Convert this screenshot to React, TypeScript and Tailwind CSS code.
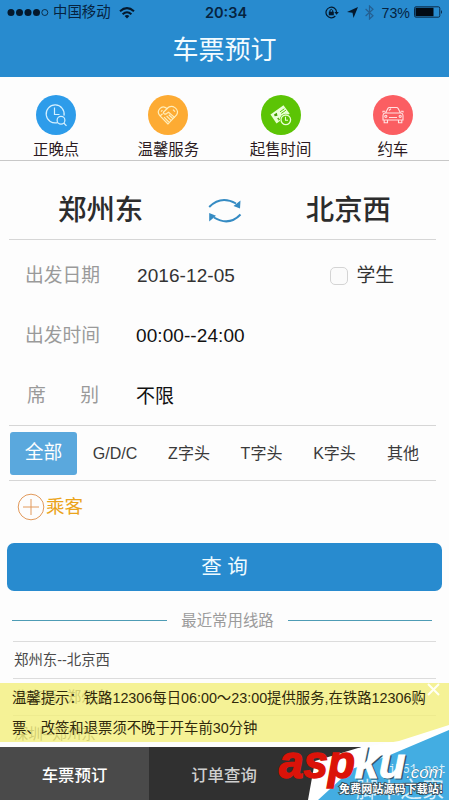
import { type ReactNode } from 'react'

interface Shortcut {
  label: string
  color: string
  icon: ReactNode
}

interface Field {
  label: ReactNode
  value: string
  valueClass: string
}

const shortcuts: Shortcut[] = [
  {
    label: '正晚点',
    color: 'bg-[#2d9cea]',
    icon: (
      <svg width="24" height="24" viewBox="0 0 24 24" fill="none" stroke="#d5f0ff" strokeWidth="1.2">
        <path d="M13.6 19.6A9 9 0 1 1 20 12.6" />
        <path d="M10.5 4.5V11.5H15.5" />
        <circle cx="17" cy="17.3" r="3.9" />
        <path d="M19.8 20L22.5 22.8" />
      </svg>
    ),
  },
  {
    label: '温馨服务',
    color: 'bg-[#fdab33]',
    icon: (
      <svg width="24" height="24" viewBox="0 0 24 24" fill="none" stroke="#ffeebb" strokeWidth="1.2">
        <path d="M12 21L3.8 12.6C-.2 8 5.5 .8 11 5.5C16 .5 24 6 20.6 12L12 21Z" />
        <path d="M11.5 5.3L7.4 9.2Q7.8 12 10.6 10.6L12.6 9.2L18.8 14.6M4 13L6.6 10.8M12.8 11.8L17 15.8M10.6 13L15 17.4M8 14.2L12.8 19M5 8.6L6.4 7.2M17 6.6L19 8.6" />
      </svg>
    ),
  },
  {
    label: '起售时间',
    color: 'bg-[#5cc405]',
    icon: (
      <svg width="24" height="24" viewBox="0 0 24 24" fill="none">
        <path d="M1.5 11.5L14.5 2.2L20.7 10.8L7.5 20.5Z" fill="#e9ffd5" />
        <path d="M5 11.5L7.8 9.8L8.5 12.8L5.7 13.3ZM8 15.8L9.8 14.4L10 17Z" fill="#42a000" />
        <path d="M11 8.8L15.3 5.8M12.2 10.5L16.8 7.3M9.5 17.2L12 15" stroke="#5cc405" />
        <circle cx="16.8" cy="16.8" r="6" fill="#5cc405" />
        <circle cx="16.8" cy="16.8" r="4.8" stroke="#e9ffd5" strokeWidth="1.3" />
        <path d="M16.5 13.8V17.2H19" stroke="#e9ffd5" strokeWidth="1.1" />
      </svg>
    ),
  },
  {
    label: '约车',
    color: 'bg-[#fb5e62]',
    icon: (
      <svg width="24" height="24" viewBox="0 0 24 24" fill="none" stroke="#ffe2e2" strokeWidth="1.1">
        <path d="M4.5 10L7 5.2Q7.4 4.5 8.3 4.5H15.7Q16.6 4.5 17 5.2L19.5 10M3.8 10H20.2Q22 10.5 22 12.5V17H2V12.5Q2 10.5 3.8 10ZM3.2 17V19.7H6.5V17M17.5 17V19.7H20.8V17M4.2 8.2H2L1.8 9.5M19.8 8.2H22L22.2 9.5" />
        <path d="M8 14.5H16M8 7.5L10 5.6" />
        <circle cx="4.8" cy="13.3" r="1.1" />
        <circle cx="19.2" cy="13.3" r="1.1" />
      </svg>
    ),
  },
]

const fields: Field[] = [
  { label: '出发日期', value: '2016-12-05', valueClass: 'text-[#333] pl-px' },
  { label: '出发时间', value: '00:00--24:00', valueClass: 'text-[#111]' },
  {
    label: (
      <span className="flex justify-between px-[2px]">
        <span>席</span>
        <span>别</span>
      </span>
    ),
    value: '不限',
    valueClass: 'text-[#111]',
  },
]

const trainTypes = [
  { name: 'G/D/C', width: 'w-[76px]' },
  { name: 'Z字头', width: 'w-[72px]' },
  { name: 'T字头', width: 'w-[73px]' },
  { name: 'K字头', width: 'w-[73px]' },
  { name: '其他', width: 'w-[64px]' },
]

function StatusBar() {
  return (
    <div className="flex h-[25px] items-center pl-[7px] pr-[6px] text-[14px] leading-none text-[#06233f]">
      <div className="flex w-[198px] items-center">
        <svg width="42" height="9" viewBox="0 0 42 9" fill="#04182c">
          <circle cx="4" cy="4.5" r="3.5" />
          <circle cx="12.5" cy="4.5" r="3.5" />
          <circle cx="21" cy="4.5" r="3.5" />
          <circle cx="29.5" cy="4.5" r="3.5" />
          <circle cx="37.8" cy="4.5" r="3" fill="none" stroke="#04182c" strokeWidth=".8" />
        </svg>
        <span className="ml-[4px] text-[14.4px] whitespace-nowrap">中国移动</span>
        <svg className="ml-[8px]" width="16" height="12" viewBox="0 0 16 12" fill="none" stroke="#04182c" strokeWidth="2">
          <path d="M1 4.3Q8 -2 15 4.3M3.6 7.2Q8 3.2 12.4 7.2" />
          <path d="M5.6 9L8 11.5L10.4 9Q8 7.2 5.6 9Z" fill="#04182c" stroke="none" />
        </svg>
      </div>
      <span className="pt-px font-['Inter'] text-[14.5px] font-semibold">20:34</span>
      <div className="ml-auto flex items-center">
        <svg width="14" height="13" viewBox="0 0 14 13" fill="none" stroke="#04182c" strokeWidth="1.2">
          <path d="M10.3 10A5.3 5.3 0 1 1 11.6 6.2" />
          <path d="M9.4 6H13.8L11.6 8.8Z" fill="#04182c" stroke="none" />
          <path d="M3.8 5.7H8.8V9.3H3.8Z" fill="#04182c" stroke="none" />
          <path d="M4.9 6V4.4Q6.3 2.4 7.7 4.4V6" strokeWidth="1" />
        </svg>
        <svg className="ml-[8px]" width="11" height="11" viewBox="0 0 11 11" fill="#04182c">
          <path d="M11 0L6.5 11L5.5 5.8L0 5Z" />
        </svg>
        <svg className="ml-[7px]" width="9" height="15" viewBox="0 0 9 15" fill="none" stroke="#245f91" strokeWidth="1.2">
          <path d="M.6 4L8 10.8L4.5 14V1L8 4.2L.6 11" />
        </svg>
        <span className="ml-[8px] pt-px text-[14.2px]">73%</span>
        <svg className="ml-[4px]" width="29" height="12" viewBox="0 0 29 12">
          <rect x=".5" y=".8" width="25.3" height="10.4" rx="1.5" fill="none" stroke="#0a2a48" />
          <rect x="1.5" y="1.8" width="18" height="8.4" fill="#020a14" />
          <path d="M27 4Q29 6 27 8Z" fill="#0a2a48" />
        </svg>
      </div>
    </div>
  )
}

function Watermark() {
  return (
    <div className="absolute bottom-0 right-0 h-[90px] w-[200px] overflow-hidden">
      <svg width="200" height="90" viewBox="0 0 200 90">
        <path d="M59 90L66 51L109 38L150 31L200 15V90Z" fill="#fff" />
        <path d="M69 90L103 59L141 45L200 20V90Z" fill="#43ade2" />
        <g fill="#d6effa">
          <text x="139" y="63" fontFamily="'Liberation Mono', monospace" fontSize="13.5" textLength="58" lengthAdjust="spacingAndGlyphs">jb51.net</text>
          <text x="107" y="87" fontFamily="'Noto Sans CJK SC', sans-serif" fontSize="22" textLength="88">脚本之家</text>
        </g>
        <g fontFamily="'Liberation Sans', sans-serif" fontStyle="italic" fontWeight="bold">
          <text x="30" y="68" fontSize="46" fill="#db1309" stroke="#db1309" strokeWidth="1.5" textLength="76" lengthAdjust="spacingAndGlyphs">asp</text>
          {/* offset copy gives the white letters their shadow */}
          <text x="107" y="69" fontSize="43" fill="#30566d" stroke="#30566d" strokeWidth="1" textLength="51" lengthAdjust="spacingAndGlyphs" aria-hidden="true">ku</text>
          <text x="105.5" y="67.5" fontSize="43" fill="#fff" stroke="#fff" strokeWidth="1" textLength="51" lengthAdjust="spacingAndGlyphs">ku</text>
          <text x="157" y="68" fontSize="17" fill="#fff" stroke="#38799e" strokeWidth="1" paintOrder="stroke" textLength="37" fontWeight="normal">.com</text>
        </g>
        <text x="90" y="83" fontFamily="'Noto Sans CJK SC', sans-serif" fontSize="11" fontWeight="bold" fill="#fff" stroke="#334b59" strokeWidth="1.8" paintOrder="stroke" textLength="104">免费网站源码下载站!</text>
      </svg>
    </div>
  )
}

export default function App() {
  return (
    <div className="relative flex h-[800px] w-[449px] flex-col overflow-hidden bg-[#fdfdfd] font-['Liberation_Sans','Noto_Sans_CJK_SC',sans-serif]">
      <header className="h-[77px] shrink-0 bg-[#288bcf]">
        <StatusBar />
        <h1 className="text-center text-[26px] leading-[51px] text-[#f2fbff]">车票预订</h1>
      </header>

      <div className="grid h-[84px] shrink-0 grid-cols-4 border-b border-[#c8c8c8] pt-[18px]">
        {shortcuts.map((s) => (
          <div key={s.label} className="flex flex-col items-center">
            <div className={`flex size-[40px] shrink-0 items-center justify-center rounded-full ${s.color}`}>
              {s.icon}
            </div>
            <span className="mt-[3px] text-[15.4px] leading-[23px] text-[#2b1a22]">{s.label}</span>
          </div>
        ))}
      </div>

      <div className="mr-[13px] ml-[9px] flex h-[79px] shrink-0 items-center justify-between border-b border-[#d6d6d6] pt-[20px] pr-[45px] pl-[49px] text-[28.4px] leading-none font-medium text-[#2c2c2c]">
        <span>郑州东</span>
        <svg className="mt-px" width="34" height="26" viewBox="0 0 34 26" fill="none" stroke="#358bc3" strokeWidth="2">
          <path d="M1.2 9Q13 -3 28 5.5M32.5 16.5Q21 28.5 6 19.5" />
          <path d="M32.5 2.5L32 10.5L25.5 8ZM1.2 23.5L1.2 15L8 17.8Z" fill="#358bc3" stroke="none" />
        </svg>
        <span>北京西</span>
      </div>

      <div className="mr-[13px] ml-[9px] h-[186px] shrink-0 border-b border-[#d6d6d6] pt-[6px]">
        {fields.map((f, i) => (
          <div key={f.value} className="flex h-[60px] items-center text-[19px] leading-none">
            <div className="ml-[16px] w-[76px] text-[18.8px] text-[#9a9a9a]">{f.label}</div>
            <div className={`ml-[35px] ${i < 2 ? '-mt-px tracking-[0.08px]' : ''} ${f.valueClass}`}>{f.value}</div>
            {i === 0 && (
              <label className="mr-[42px] ml-auto flex items-center pt-px text-[18.8px] text-[#333]">
                <span className="mr-[8px] size-[18px] rounded-[5px] border border-[#d4d4d4] bg-[#fbfbfb]" />
                学生
              </label>
            )}
          </div>
        ))}
      </div>

      <div className="mr-[13px] ml-[9px] flex h-[55px] shrink-0 items-center border-b border-[#d6d6d6] text-[16px] text-[#3a3a3a]">
        <span className="ml-px flex h-[43px] w-[67px] items-center justify-center rounded-[3px] bg-[#5aa8dd] pt-px text-[18.8px] text-white">全部</span>
        {trainTypes.map((t) => (
          <span key={t.name} className={`${t.width} shrink-0 pt-px text-center whitespace-nowrap`}>{t.name}</span>
        ))}
      </div>

      <div className="flex h-[62px] shrink-0 items-start pt-[12px] pl-[17px] text-[18.6px] leading-[27px] text-[#eba41b]">
        <svg className="mr-[1px]" width="28" height="28" viewBox="0 0 28 28" fill="none" stroke="#e29a5c" strokeWidth="1">
          <circle cx="14" cy="14" r="12.8" />
          <path d="M14 6V22M6 14H22" />
        </svg>
        乘客
      </div>

      <button className="mx-[7px] h-[48px] shrink-0 rounded-[7px] bg-[#288bcf] pt-px text-[20.5px] text-[#eefaff]">查 询</button>

      <div className="flex h-[50px] shrink-0 items-center pt-[9px] pr-[17px] pl-[12px] text-[15.4px] text-[#9b9b9b]">
        <span className="h-[1.5px] w-[155px] bg-[#4e9cb5]" />
        <span className="flex-1 text-center">最近常用线路</span>
        <span className="h-[1.5px] w-[144px] bg-[#4e9cb5]" />
      </div>
      <div className="mr-[13px] ml-[13px] shrink-0 text-[14.4px] leading-[36px] text-[#4b4b4b]">
        <div className="h-[37px] border-t border-[#dcdcdc] pl-px">郑州东--北京西</div>
        <div className="h-[37px] border-t border-[#dcdcdc] pl-px">北京西--郑州东</div>
        <div className="h-[37px] border-t border-[#dcdcdc] pl-px">深圳--郑州东</div>
      </div>

      <div className="absolute inset-x-0 bottom-[58px] h-[59px] bg-[#f3ef7c]/80 pl-[12px] text-[14.35px] leading-[30px] whitespace-nowrap text-[#30290b]">
        <p>温馨提示：铁路12306每日06:00～23:00提供服务,在铁路12306购</p>
        <p>票、改签和退票须不晚于开车前30分钟</p>
        <svg className="absolute top-0 right-[9px]" width="13" height="13" viewBox="0 0 13 13" stroke="#fffff4" strokeWidth="2">
          <path d="M1 1L12 12M12 1L1 12" />
        </svg>
      </div>

      <nav className="absolute inset-x-0 bottom-0 flex h-[53px] bg-[#303030] text-[16.4px] leading-[57px] font-medium">
        <span className="w-[149px] bg-[#4a4a4a] text-center text-white">车票预订</span>
        <span className="w-[150px] text-center text-[#cfcfcf]">订单查询</span>
      </nav>
      <Watermark />
    </div>
  )
}
